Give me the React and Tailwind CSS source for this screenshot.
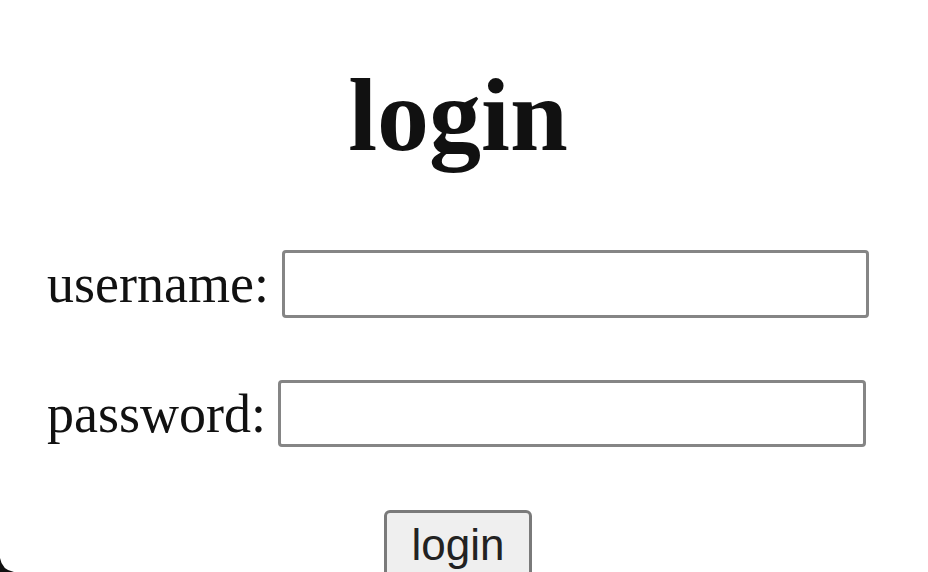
import React, { useState } from 'react';

const serif = { fontFamily: '"Liberation Serif", "Times New Roman", serif' };

const App = () => {
  const [username, setUsername] = useState('');
  const [password, setPassword] = useState('');

  return (
    <div className="relative w-[928px] h-[572px] overflow-hidden bg-white text-[#111]" style={serif}>
      <div className="ml-[47px] w-[822px] pt-[63px]">
        <h1 className="text-center text-[104px] font-bold leading-none">login</h1>
        <form onSubmit={(e) => e.preventDefault()}>
          <div className="mt-[83px] flex items-center gap-[13px]">
            <label className="text-[54px] leading-none">username:</label>
            <input
              type="text"
              value={username}
              onChange={(e) => setUsername(e.target.value)}
              className="h-[68px] w-[588px] rounded-[4px] border-[3px] border-[#858585] bg-white px-2 outline-none"
            />
          </div>
          <div className="mt-[62px] flex items-center gap-[12px]">
            <label className="text-[54px] leading-none">password:</label>
            <input
              type="password"
              value={password}
              onChange={(e) => setPassword(e.target.value)}
              className="h-[67px] w-[588px] rounded-[4px] border-[3px] border-[#858585] bg-white px-2 outline-none"
            />
          </div>
          <div className="mt-[63px] flex justify-center">
            <button
              type="submit"
              className="h-[70px] w-[148px] rounded-[6px] border-[3px] border-[#7a7a7a] bg-[#efefef] text-[44px] leading-none text-[#222]"
              style={{ fontFamily: '"Liberation Sans", Arial, sans-serif' }}
            >
              login
            </button>
          </div>
        </form>
      </div>
      <svg className="absolute bottom-0 left-0" width="18" height="18" viewBox="0 0 18 18">
        <path d="M0 4 Q2 16 14 18 L0 18 Z" fill="#111" />
      </svg>
    </div>
  );
};

export default App;
